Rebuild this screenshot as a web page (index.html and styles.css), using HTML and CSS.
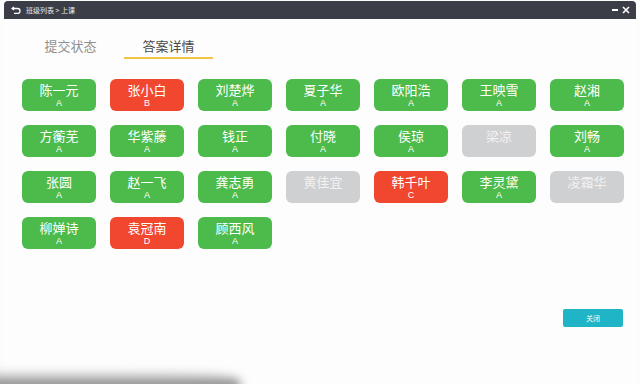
FILE: index.html
```html
<!DOCTYPE html>
<html lang="zh-CN">
<head>
    <meta charset="UTF-8">
    <title>答案详情</title>
    <link rel="stylesheet" href="styles.css">
</head>
<body>
<div class="window">
    <!-- 标题栏 -->
    <div class="titlebar">
        <div class="crumbs">
            <svg class="back" width="10" height="8" viewBox="0 0 10 8">
                <path d="M3 1 L1 2.5 L3 4 M1 2.5 H6.5 A2.5 2.5 0 0 1 6.5 7.5 H3" fill="none" stroke="#fff" stroke-width="1.3"/>
            </svg>
            <span>班级列表 &gt; 上课</span>
        </div>
        <div class="controls">
            <span class="min"></span>
            <svg width="8" height="8" viewBox="0 0 8 8">
                <path d="M1 1 L7 7 M7 1 L1 7" stroke="#fff" stroke-width="1.6"/>
            </svg>
        </div>
    </div>

    <!-- 标签页 -->
    <div class="tabs">
        <div class="tab">提交状态</div>
        <div class="tab active">答案详情</div>
    </div>

    <!-- 学生列表 -->
    <div class="grid">
        <div class="stu ok"><b>陈一元</b><i>A</i></div>
        <div class="stu bad"><b>张小白</b><i>B</i></div>
        <div class="stu ok"><b>刘楚烨</b><i>A</i></div>
        <div class="stu ok"><b>夏子华</b><i>A</i></div>
        <div class="stu ok"><b>欧阳浩</b><i>A</i></div>
        <div class="stu ok"><b>王映雪</b><i>A</i></div>
        <div class="stu ok"><b>赵湘</b><i>A</i></div>

        <div class="stu ok"><b>方蘅芜</b><i>A</i></div>
        <div class="stu ok"><b>华紫藤</b><i>A</i></div>
        <div class="stu ok"><b>钱正</b><i>A</i></div>
        <div class="stu ok"><b>付晓</b><i>A</i></div>
        <div class="stu ok"><b>侯琼</b><i>A</i></div>
        <div class="stu none"><b>梁凉</b><i></i></div>
        <div class="stu ok"><b>刘畅</b><i>A</i></div>

        <div class="stu ok"><b>张圆</b><i>A</i></div>
        <div class="stu ok"><b>赵一飞</b><i>A</i></div>
        <div class="stu ok"><b>龚志勇</b><i>A</i></div>
        <div class="stu none"><b>黄佳宜</b><i></i></div>
        <div class="stu bad"><b>韩千叶</b><i>C</i></div>
        <div class="stu ok"><b>李灵黛</b><i>A</i></div>
        <div class="stu none"><b>凌霜华</b><i></i></div>

        <div class="stu ok"><b>柳婵诗</b><i>A</i></div>
        <div class="stu bad"><b>袁冠南</b><i>D</i></div>
        <div class="stu ok"><b>顾西风</b><i>A</i></div>
    </div>

    <div class="footer">
        <button class="close-btn">关闭</button>
    </div>
</div>
<div class="shadow"></div>
</body>
</html>
```

FILE: styles.css
```css
html, body {
    margin: 0;
    height: 100%;
    background: #fbfcfc;
    font-family: "Noto Sans CJK SC", "Noto Sans", sans-serif;
    overflow: hidden;
}

.window {
    margin: 1px 4px 0 4px;
    height: 383px;
    background: #fdfdfd;
    border-radius: 4px 4px 0 0;
}

.titlebar {
    height: 18px;
    background: #3b3e47;
    border-radius: 4px 4px 0 0;
    display: flex;
    align-items: center;
    justify-content: space-between;
    padding: 0 6px 0 7px;
    color: #e8e8ea;
    font-size: 7px;
}

.crumbs {
    display: flex;
    align-items: center;
    gap: 5px;
}

.controls {
    display: flex;
    align-items: center;
    gap: 4px;
}

.min {
    width: 6px;
    height: 2px;
    background: #fff;
}

.tabs {
    display: flex;
    gap: 9px;
    padding: 18px 0 0 22px;
    height: 22px;
}

.tab {
    width: 89px;
    text-align: center;
    font-size: 13px;
    line-height: 18px;
    color: #909090;
}

.tab.active {
    color: #4a4a4a;
    border-bottom: 2px solid #f2c34a;
}

.grid {
    display: grid;
    grid-template-columns: repeat(7, 74px);
    column-gap: 14px;
    row-gap: 14px;
    padding: 20px 0 0 18px;
}

.stu {
    height: 32px;
    border-radius: 6px;
    color: #fff;
    display: flex;
    flex-direction: column;
    align-items: center;
    justify-content: flex-start;
    padding-top: 2px;
    box-sizing: border-box;
}

.stu b {
    font-weight: normal;
    font-size: 13px;
    line-height: 17px;
    height: 17px;
}

.stu i {
    font-style: normal;
    font-size: 9px;
    line-height: 11px;
    height: 11px;
    font-family: "Liberation Sans", sans-serif;
}

.ok { background: #4cbb4b; }
.bad { background: #f1472f; }
.none { background: #cfd0d2; color: #f2f2f2; }

.footer {
    display: flex;
    justify-content: flex-end;
    padding: 60px 13px 0 0;
}

.close-btn {
    width: 60px;
    height: 18px;
    border: none;
    border-radius: 2px;
    background: #1fb5c6;
    color: #fff;
    font-size: 7px;
    font-family: "Noto Sans CJK SC", sans-serif;
    padding: 0;
}

.shadow {
    position: absolute;
    left: -10px;
    bottom: -6px;
    width: 250px;
    height: 20px;
    background: linear-gradient(to bottom, rgba(120,120,120,0), rgba(80,80,80,0.9));
    border-radius: 0 50% 0 0;
    filter: blur(5px);
}
```
